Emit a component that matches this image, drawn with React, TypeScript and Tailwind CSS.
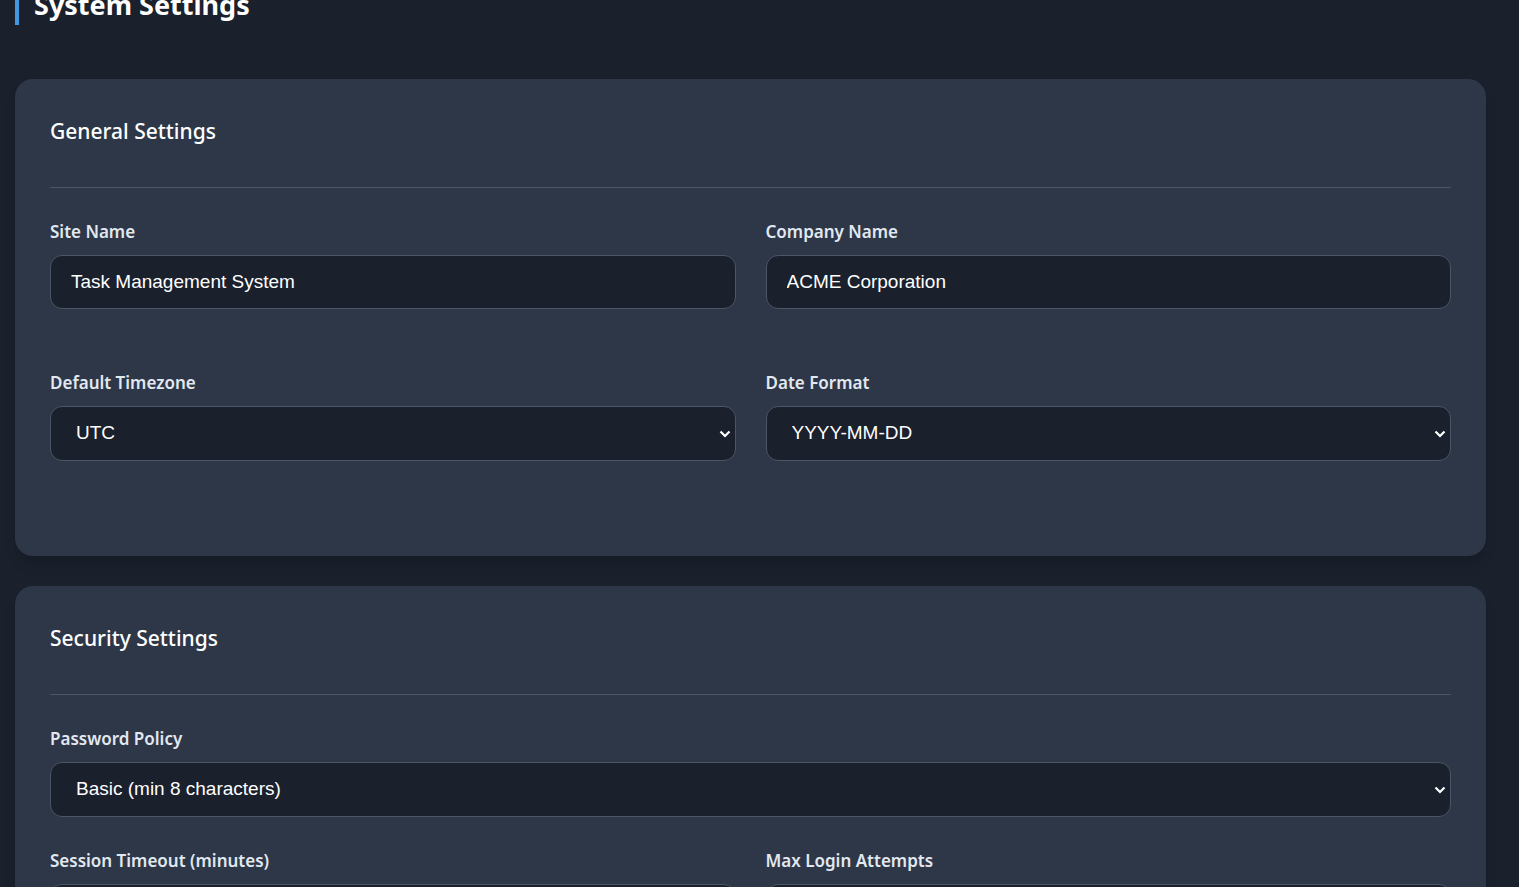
import React from "react";

const sans = "font-['Noto_Sans','Open_Sans',sans-serif]";
const arial = "font-['Liberation_Sans',Arial,sans-serif]";

function Chevron() {
    return (
        <svg
            className="pointer-events-none absolute right-[5px] top-1/2 -translate-y-1/2"
            width="12"
            height="8"
            viewBox="0 0 12 8"
            fill="none"
        >
            <path d="M1.5 1.5 L6 6 L10.5 1.5" stroke="#ffffff" strokeWidth="2.2" />
        </svg>
    );
}

function Field({ label, value }: { label: string; value: string }) {
    return (
        <div className="flex flex-col">
            <label className={`${sans} text-[17px] font-semibold leading-[24px] text-[#e2e8f0] mb-[11px]`}>{label}</label>
            <input
                readOnly
                value={value}
                className={`${arial} h-[54px] w-full rounded-[12px] border border-[#4a5568] bg-[#1a202c] px-[20px] text-[19px] text-white outline-none`}
            />
        </div>
    );
}

function SelectField({ label, value }: { label: string; value: string }) {
    return (
        <div className="flex flex-col">
            <label className={`${sans} text-[17px] font-semibold leading-[24px] text-[#e2e8f0] mb-[11px]`}>{label}</label>
            <div className="relative">
                <select
                    value={value}
                    onChange={() => {}}
                    className={`${arial} h-[55px] w-full appearance-none rounded-[12px] border border-[#4a5568] bg-[#1a202c] pl-[25px] pr-[30px] text-[19px] text-white outline-none`}
                >
                    <option>{value}</option>
                </select>
                <Chevron />
            </div>
        </div>
    );
}

function Card({ title, children }: { title: string; children: React.ReactNode }) {
    return (
        <section className="rounded-[18px] bg-[#2d3748] px-[35px] pt-[36px] pb-[35px] shadow-lg">
            <h2 className={`${sans} text-[21px] font-medium leading-[33px] text-white pb-[39px] border-b border-[#4a5568] mb-[32px]`}>
                {title}
            </h2>
            {children}
        </section>
    );
}

export default function App() {
    return (
        <div className="min-h-screen bg-[#1a202c] pl-[15px] pr-[33px] pb-[60px]">
            <h1
                className={`${sans} -mt-[15px] mb-[54px] h-[40px] border-l-4 border-[#4299e1] pl-[15px] text-[27px] font-bold leading-[40px] text-white`}
            >
                System Settings
            </h1>

            <Card title="General Settings">
                <div className="grid grid-cols-2 gap-x-[30px] gap-y-[62px] mb-[60px]">
                    <Field label="Site Name" value="Task Management System" />
                    <Field label="Company Name" value="ACME Corporation" />
                    <SelectField label="Default Timezone" value="UTC" />
                    <SelectField label="Date Format" value="YYYY-MM-DD" />
                </div>
            </Card>

            <div className="mt-[30px]">
                <Card title="Security Settings">
                    <div className="mb-[32px]">
                        <SelectField label="Password Policy" value="Basic (min 8 characters)" />
                    </div>
                    <div className="grid grid-cols-2 gap-x-[30px] gap-y-[60px] mb-[60px]">
                        <Field label="Session Timeout (minutes)" value="30" />
                        <Field label="Max Login Attempts" value="5" />
                    </div>
                </Card>
            </div>
        </div>
    );
}
